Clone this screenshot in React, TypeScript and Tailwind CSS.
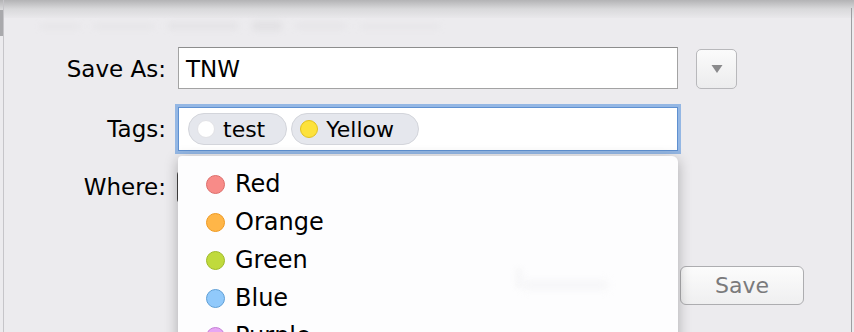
import React from "react";

const items = [
  { name: "Red", fill: "bg-[#f88b88]", border: "border-[#dd6e6b]" },
  { name: "Orange", fill: "bg-[#ffb648]", border: "border-[#ef9a22]" },
  { name: "Green", fill: "bg-[#c0da3c]", border: "border-[#9fba28]" },
  { name: "Blue", fill: "bg-[#90c9fb]", border: "border-[#5f9fd6]" },
  { name: "Purple", fill: "bg-[#e6a6f4]", border: "border-[#c47fd6]" },
];

export default function App() {
  return (
    <div className="relative w-[854px] h-[332px] overflow-hidden bg-[#ecebee] font-['DejaVu_Sans',sans-serif] text-black">
      {/* top shadow of window above */}
      <div className="h-[18px] bg-gradient-to-b from-[#b3b3b5] via-[#d9d9db] to-[#e9e8eb]" />
      {/* faint blurred toolbar */}
      <div className="flex items-center gap-[14px] h-[16px] pl-[40px] opacity-40 blur-[3px]">
        <div className="w-[40px] h-[5px] bg-[#dcdbde]" />
        <div className="w-[60px] h-[5px] bg-[#dcdbde]" />
        <div className="w-[70px] h-[8px] bg-[#dad9dc]" />
        <div className="w-[30px] h-[10px] bg-[#d4d3d6]" />
        <div className="w-[50px] h-[6px] bg-[#dcdbde]" />
        <div className="w-[80px] h-[5px] bg-[#dedde0]" />
      </div>

      {/* side edges */}
      <div className="absolute left-[3px] top-0 bottom-0 w-[1px] bg-[#c6c5c9]" />
      <div className="absolute left-0 top-[10px] w-[3px] h-[26px] bg-[#a9a9ac]" />
      <div className="absolute right-[2px] top-[8px] bottom-0 w-[1px] bg-[#9e9ea2]" />

      <div className="flex flex-col text-[23px]">
        {/* Save As row */}
        <div className="flex items-center mt-[13px] h-[42px]">
          <div className="w-[166px] text-right leading-none pt-[2px]">Save As:</div>
          <div className="ml-[12px] w-[500px] h-[42px] bg-white border border-[#a3a3a3] border-t-[#8d8d8d] flex items-center pl-[7px] pt-[2px] leading-none">
            TNW
          </div>
          <div className="ml-[18px] mt-[2px] w-[41px] h-[40px] rounded-[5px] border border-[#b8b8bb] bg-gradient-to-b from-[#fbfbfb] to-[#ececed] flex items-center justify-center">
            <svg width="12" height="10" viewBox="0 0 12 10">
              <path d="M0.5 1 L11.5 1 L6 9 Z" fill="#8a8a8c" />
            </svg>
          </div>
        </div>

        {/* Tags row */}
        <div className="flex items-center mt-[18px] h-[44px]">
          <div className="w-[166px] text-right leading-none">Tags:</div>
          <div className="ml-[12px] w-[500px] h-[44px] bg-white border border-[#5f90d0] shadow-[0_0_0_3px_#94b7e4] flex items-center pl-[9px] gap-[4px] text-[22px]">
            <div className="flex items-center h-[32px] pl-[8px] pr-[21px] gap-[8px] rounded-full bg-[#e5e7ed] border border-[#d3d5db]">
              <div className="w-[18px] h-[18px] rounded-full bg-white border border-[#e2e2e6]" />
              <span className="leading-none pt-[1px]">test</span>
            </div>
            <div className="flex items-center h-[32px] pl-[8px] pr-[24px] gap-[8px] rounded-full bg-[#e5e7ed] border border-[#d3d5db]">
              <div className="w-[18px] h-[18px] rounded-full bg-[#fde23c] border border-[#e2c11e]" />
              <span className="leading-none pt-[1px]">Yellow</span>
            </div>
          </div>
        </div>

        {/* Where row */}
        <div className="flex items-center mt-[16px] h-[40px]">
          <div className="w-[166px] text-right leading-none">Where:</div>
          <div className="ml-[11px] w-[40px] h-[32px] rounded-l-[4px] border border-r-0 border-[#444] bg-white" />
        </div>

        {/* Buttons row */}
        <div className="flex items-center mt-[59px] h-[39px]">
          <div className="ml-[510px] w-[130px] h-[39px]" />
          <div className="ml-[40px] w-[124px] h-[39px] rounded-[6px] border border-[#adadb0] bg-gradient-to-b from-[#fcfcfc] to-[#efeff0] flex items-center justify-center text-[22px] text-[#7a7a7c] leading-none">
            Save
          </div>
        </div>
      </div>

      {/* Tag menu */}
      <div className="absolute left-[178px] top-[156px] w-[500px] h-[200px] bg-[#fdfdfe] rounded-tl-[4px] rounded-tr-[6px] shadow-[0_3px_14px_rgba(0,0,0,0.28)] pt-[9px] pl-[28px] text-[24px]">
        <div className="absolute left-[345px] top-[125px] w-[85px] h-[8px] bg-[#ececef] blur-[4px] opacity-50" />
        <div className="absolute left-[338px] top-[112px] w-[6px] h-[20px] bg-[#eeeef1] blur-[3px] opacity-50" />
        {items.map((it) => (
          <div key={it.name} className="relative flex items-center h-[38px] gap-[10px]">
            <div className={`w-[19px] h-[19px] rounded-full border ${it.fill} ${it.border}`} />
            <span className="leading-none">{it.name}</span>
          </div>
        ))}
      </div>
    </div>
  );
}
